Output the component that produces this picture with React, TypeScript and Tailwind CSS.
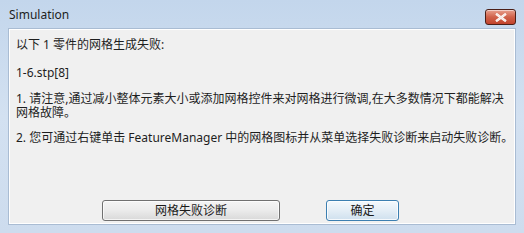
import React from "react";

// Close button of the caption bar
const CloseButton: React.FC = () => {
  return (
    <button className="flex h-[16px] w-[31px] items-center justify-center rounded-[3px] border border-[#4b1f17] bg-gradient-to-b from-[#e8a08e] via-[#d0624a] to-[#c2432c] shadow-[inset_0_1px_0_rgba(255,255,255,0.5)]">
      <svg width="12" height="9" viewBox="0 0 12 9">
        <path
          d="M2 1.5 L10 7.5 M10 1.5 L2 7.5"
          stroke="#ffffff"
          strokeWidth="2.4"
          strokeLinecap="square"
        />
        <path
          d="M2 1.5 L10 7.5 M10 1.5 L2 7.5"
          stroke="#f6e6e0"
          strokeWidth="1.2"
          strokeLinecap="square"
        />
      </svg>
    </button>
  );
};

interface DialogButtonProps {
  label: string;
  width: string;
  isDefault?: boolean;
}

const DialogButton: React.FC<DialogButtonProps> = ({ label, width, isDefault = false }) => {
  return (
    <button
      className={`flex h-[21px] items-center justify-center rounded-[3px] border text-[12px] text-[#1a1a1a] ${width} ${
        isDefault
          ? "border-[#3c7fb1] bg-gradient-to-b from-[#f4f9fd] via-[#e4eef6] to-[#cfe0ee] shadow-[inset_0_0_0_1px_rgba(255,255,255,0.8)]"
          : "border-[#707070] bg-gradient-to-b from-[#f4f4f4] via-[#ebebeb] to-[#d9d9d9] shadow-[inset_0_0_0_1px_rgba(255,255,255,0.7)]"
      }`}
    >
      {label}
    </button>
  );
};

export default function App() {
  return (
    <div
      className="flex h-[233px] w-[524px] flex-col bg-gradient-to-b from-[#c3d6ec] via-[#d3e1f1] to-[#cddcee]"
      style={{ fontFamily: '"Noto Sans", "Noto Sans CJK SC", sans-serif' }}
    >
      <header className="flex h-[28px] items-start justify-between pl-[9px] pr-[8px]">
        <span className="mt-[7px] text-[12px] leading-[16px] text-[#1e1e1e]">Simulation</span>
        <div className="mt-[9px]">
          <CloseButton />
        </div>
      </header>

      <div className="mx-[8px] flex h-[197px] flex-col border border-[#a9bcd3] bg-[#f0f0f0] pl-[7px] pt-[9px] text-[12px] leading-[14px] text-[#1e1e1e] shadow-[inset_0_0_0_1px_#ffffff]">
        <p>以下 1 零件的网格生成失败:</p>
        <p className="mt-[14px]">1-6.stp[8]</p>
        <p className="mt-[12px] pr-[6px]">
          1. 请注意,通过减小整体元素大小或添加网格控件来对网格进行微调,在大多数情况下都能解决网格故障。
        </p>
        <p className="mt-[11px]">
          2. 您可通过右键单击 FeatureManager 中的网格图标并从菜单选择失败诊断来启动失败诊断。
        </p>

        <div className="mt-auto mb-[3px] flex gap-[46px] pl-[86px]">
          <DialogButton label="网格失败诊断" width="w-[178px]" />
          <DialogButton label="确定" width="w-[73px]" isDefault />
        </div>
      </div>
    </div>
  );
}
